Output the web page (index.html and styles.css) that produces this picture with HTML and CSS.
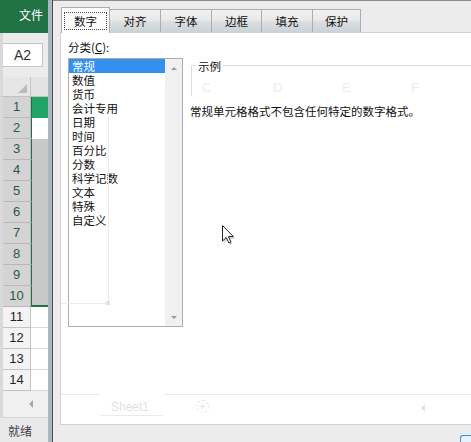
FILE: index.html
```html
<!DOCTYPE html>
<html lang="zh-CN">
<head>
<meta charset="utf-8">
<title>设置单元格格式</title>
<link rel="stylesheet" href="styles.css">
</head>
<body>
<div class="app">
  <div class="excel">
    <div class="xl-title">文件</div>
    <div class="xl-formula"><div class="namebox">A2</div></div>
    <div class="xl-colhead"><div class="corner"><span class="tri"></span></div><div class="colA"></div></div>
    <div class="xl-rows">
      <div class="xrow sel"><div class="rh">1</div><div class="cell green"></div></div>
      <div class="xrow sel"><div class="rh">2</div><div class="cell active"></div></div>
      <div class="xrow sel"><div class="rh">3</div><div class="cell"></div></div>
      <div class="xrow sel"><div class="rh">4</div><div class="cell"></div></div>
      <div class="xrow sel"><div class="rh">5</div><div class="cell"></div></div>
      <div class="xrow sel"><div class="rh">6</div><div class="cell"></div></div>
      <div class="xrow sel"><div class="rh">7</div><div class="cell"></div></div>
      <div class="xrow sel"><div class="rh">8</div><div class="cell"></div></div>
      <div class="xrow sel"><div class="rh">9</div><div class="cell"></div></div>
      <div class="xrow sel last"><div class="rh">10</div><div class="cell"></div></div>
      <div class="xrow"><div class="rh">11</div><div class="cell"></div></div>
      <div class="xrow"><div class="rh">12</div><div class="cell"></div></div>
      <div class="xrow"><div class="rh">13</div><div class="cell"></div></div>
      <div class="xrow"><div class="rh">14</div><div class="cell"></div></div>
    </div>
    <div class="xl-sheetbar"><span class="larr"></span></div>
    <div class="xl-status">就绪</div>
  </div>
  <div class="edge"></div>
  <div class="dialog">
    <div class="tabs">
      <div class="tab active w49"><span class="focus">数字</span></div>
      <div class="tab w52">对齐</div>
      <div class="tab w52">字体</div>
      <div class="tab w51">边框</div>
      <div class="tab w52">填充</div>
      <div class="tab w49">保护</div>
    </div>
    <div class="panel">
      <div class="left">
        <div class="lbl">分类(<u>C</u>):</div>
        <div class="listbox">
          <ul class="items">
            <li class="selected">常规</li>
            <li>数值</li>
            <li>货币</li>
            <li>会计专用</li>
            <li>日期</li>
            <li>时间</li>
            <li>百分比</li>
            <li>分数</li>
            <li>科学记数</li>
            <li>文本</li>
            <li>特殊</li>
            <li>自定义</li>
          </ul>
          <div class="scroll"><span class="up"></span><span class="down"></span></div>
        </div>
      </div>
      <div class="right">
        <div class="sample"><span class="sample-legend">示例</span></div>
        <p class="desc">常规单元格格式不包含任何特定的数字格式。</p>
      </div>

      <span class="ghost g-c">C</span>
      <span class="ghost g-d">D</span>
      <span class="ghost g-e">E</span>
      <span class="ghost g-f">F</span>
      <span class="ghost-line g-vline"></span>
      <span class="ghost-line g-hline"></span>
      <span class="ghost-line g-sq"></span>
      <span class="ghost-line g-bar1"></span>
      <span class="ghost-line g-bar2"></span>
      <span class="ghost-line g-bar3"></span>
      <span class="ghost g-sheet">Sheet1</span>
      <span class="ghost g-plus">+</span>
      <span class="ghost-tri g-arrow"></span>

      <svg class="cursor" width="14" height="21" viewBox="0 0 14 21">
        <path d="M2.5 3.5 L2.5 19.5 L6.5 15.8 L9.2 21 L11.4 20 L8.8 14.8 L14 14.8 Z" fill="#9a9a9a" opacity="0.45"/>
        <path d="M1.5 1.5 L1.5 17 L5.2 13.5 L8 19 L10 18 L7.4 12.6 L12.4 12.6 Z" fill="#fff" stroke="#1a2a2a" stroke-width="1" stroke-linejoin="miter"/>
      </svg>
    </div>
    <div class="dlg-bottom"><span class="okbtn"></span></div>
  </div>
</div>
</body>
</html>
```

FILE: styles.css
```css
* { box-sizing: border-box; }
html, body { margin: 0; padding: 0; }
body {
  width: 471px;
  height: 442px;
  overflow: hidden;
  background: #fff;
  color: #111;
  font-family: "Noto Sans CJK SC", "Microsoft YaHei", sans-serif;
  font-size: 12px;
}
.app { display: flex; width: 471px; height: 442px; overflow: hidden; }

/* Excel strip */
.excel { width: 48px; flex: none; display: flex; flex-direction: column; }
.xl-title {
  height: 33px;
  background: #217346;
  color: #fff;
  padding-left: 19px;
  line-height: 30px;
}
.xl-formula {
  height: 44px;
  background: #ececec;
  border-left: 3px solid #d9d9d9;
  padding-top: 10px;
}
.namebox {
  width: 40px;
  height: 24px;
  background: #fff;
  border: 1px solid #c6c6c6;
  border-left: none;
  font: 14px "Liberation Sans", Arial, sans-serif;
  line-height: 22px;
  padding-left: 11px;
  color: #333;
}
.xl-colhead {
  height: 20px;
  display: flex;
  border-left: 3px solid #d9d9d9;
  background: #e6e6e6;
  border-bottom: 1px solid #c0c0c0;
}
.corner {
  width: 28px;
  border-right: 1px solid #c6c6c6;
  display: flex;
  justify-content: flex-end;
  align-items: flex-end;
  padding: 0 3px 3px 0;
}
.tri {
  width: 0; height: 0;
  border-left: 9px solid transparent;
  border-bottom: 9px solid #bcbcbc;
}
.colA { flex: 1; background: #e3e3e3; }

.xrow { height: 21px; display: flex; border-left: 3px solid #d9d9d9; }
.rh {
  width: 28px;
  flex: none;
  border-right: 1px solid #c4c4c4;
  border-bottom: 1px solid #c4c4c4;
  background: #f3f3f3;
  color: #262626;
  text-align: center;
  font: 13px "Liberation Sans", Arial, sans-serif;
  line-height: 20px;
}
.cell { flex: 1; background: #fff; border-bottom: 1px solid #dadada; }
.xrow.sel .rh { background: #d4d4d4; color: #2b5a3c; border-color: #b9b9b9; }
.xrow.sel .cell {
  background: #c8c8c8;
  border-left: 1px solid #217346;
  border-bottom-color: #c8c8c8;
}
.xrow.sel .cell.green { background: #21a366; border-bottom-color: #21a366; }
.xrow.sel .cell.active { background: #fff; border-bottom-color: #fff; }
.xrow.sel.last .cell { border-bottom: 2px solid #217346; }

.xl-sheetbar {
  height: 26px;
  background: #f0f0f0;
  border-left: 3px solid #d9d9d9;
  display: flex;
  align-items: center;
  padding-left: 26px;
}
.larr {
  width: 0; height: 0;
  border-right: 4px solid #a8a8a8;
  border-top: 4px solid transparent;
  border-bottom: 4px solid transparent;
}
.xl-status {
  height: 25px;
  background: #e9e9e9;
  border-top: 1px solid #d6d6d6;
  padding: 1px 0 0 8px;
  line-height: 24px;
  color: #444;
}

.edge { width: 5px; flex: none; background: #a9b6c2; border-right: 1px solid #4d4d4d; }

/* Dialog */
.dialog {
  width: 418px;
  flex: none;
  background: #ececec;
  border-top: 1px solid #8a8a8a;
  padding-top: 6px;
  display: flex;
  flex-direction: column;
  font-size: 11.5px;
}
.tabs {
  display: flex;
  align-items: flex-end;
  height: 26px;
  padding-left: 8px;
  margin-bottom: -1px;
  position: relative;
  z-index: 1;
}
.tab {
  height: 23px;
  margin-bottom: 1px;
  margin-left: -1px;
  border: 1px solid #adadad;
  border-bottom: none;
  background: linear-gradient(#f1f1f1 0%, #e9e9e9 45%, #d9dee1 55%, #cbd2d6 100%);
  text-align: center;
  line-height: 22px;
  color: #111;
}
.tab:first-child { margin-left: 0; }
.tab.active {
  height: 26px;
  margin-bottom: 0;
  background: #fff;
  padding: 4px 2px 0;
  position: relative;
  z-index: 2;
}
.focus {
  display: block;
  height: 18px;
  border: 1px dotted #444;
  line-height: 16px;
}
.w49 { width: 49px; }
.w51 { width: 51px; }
.w52 { width: 52px; }

.panel {
  position: relative;
  height: 393px;
  flex: none;
  margin-left: 7px;
  background: #fff;
  border: 1px solid #d2d2d2;
  border-right: none;
  display: flex;
  gap: 7px;
  padding: 7px 0 0 7px;
}
.left { width: 115px; flex: none; }
.lbl { height: 14px; line-height: 14px; }
.lbl u { text-decoration: underline; }
.listbox {
  margin-top: 4px;
  width: 115px;
  height: 269px;
  border: 1px solid #abadb3;
  display: flex;
}
.items { flex: 1; list-style: none; margin: 0; padding: 0; }
.items li { height: 14px; line-height: 14px; padding-left: 3px; white-space: nowrap; }
.items li.selected { background: #3390ef; color: #fff; }
.scroll {
  width: 17px;
  flex: none;
  background: #f0f0f0;
  display: flex;
  flex-direction: column;
  justify-content: space-between;
  align-items: center;
  padding: 8px 0 7px;
}
.up { width: 0; height: 0; border-left: 3px solid transparent; border-right: 3px solid transparent; border-bottom: 3px solid #9a9a9a; }
.down { width: 0; height: 0; border-left: 3px solid transparent; border-right: 3px solid transparent; border-top: 3px solid #9a9a9a; }

.right { flex: 1; }
.sample {
  margin: 25px 0 0 1px;
  height: 31px;
  border-top: 1px solid #dcdcdc;
  border-left: 1px solid #dcdcdc;
}
.sample-legend {
  display: inline-block;
  vertical-align: top;
  margin: -7px 0 0 4px;
  padding: 0 2px;
  background: #fff;
  line-height: 14px;
}
.desc { margin: 8px 0 0; line-height: 14px; white-space: nowrap; }

/* faint afterimages of the sheet behind the dialog */
.ghost { position: absolute; color: #ececec; font: 13px "Liberation Sans", Arial, sans-serif; line-height: 14px; }
.g-c { left: 141px; top: 48px; }
.g-d { left: 212px; top: 48px; }
.g-e { left: 281px; top: 48px; }
.g-f { left: 350px; top: 48px; }
.ghost-line { position: absolute; background: #eaeaea; }
.g-vline { left: 47px; top: 84px; width: 1px; height: 186px; }
.g-hline { left: 0; top: 270px; width: 47px; height: 1px; }
.g-sq { left: 45px; top: 268px; width: 4px; height: 4px; background: #e2e2e2; }
.g-bar1 { left: 0; top: 361px; width: 39px; height: 1px; }
.g-bar2 { left: 102px; top: 361px; width: 320px; height: 1px; }
.g-bar3 { left: 39px; top: 382px; width: 63px; height: 1px; }
.g-sheet { left: 50px; top: 367px; color: #e2e2e2; font-size: 12px; }
.g-plus {
  left: 135px; top: 367px;
  width: 13px; height: 13px;
  border: 1px dashed #e4e4e4;
  border-radius: 50%;
  font-size: 11px;
  line-height: 11px;
  text-align: center;
  color: #e4e4e4;
}
.ghost-tri {
  position: absolute;
  left: 360px; top: 371px;
  width: 0; height: 0;
  border-right: 4px solid #e4e4e4;
  border-top: 4px solid transparent;
  border-bottom: 4px solid transparent;
}
.cursor { position: absolute; left: 160px; top: 191px; }

.dlg-bottom { flex: 1; display: flex; justify-content: flex-end; padding-top: 10px; }
.okbtn {
  width: 11px;
  height: 10px;
  border: 1px solid #3c8edc;
  border-right: none;
  border-bottom: none;
  border-radius: 3px 0 0 0;
  background: #e5f1fb;
}
```
